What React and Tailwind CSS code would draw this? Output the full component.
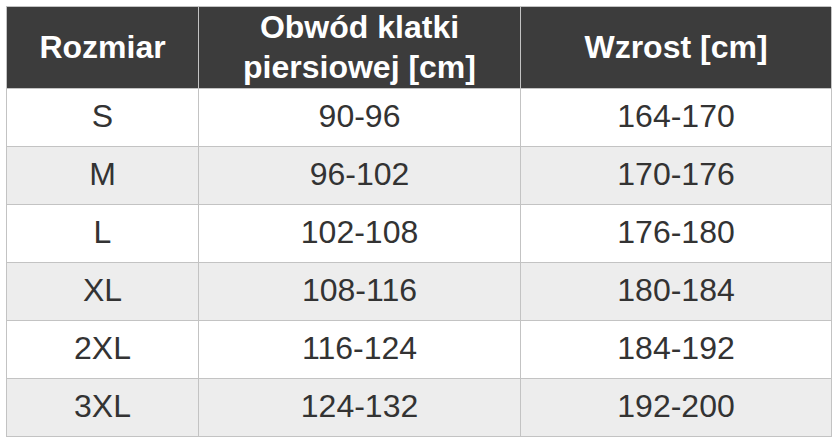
const rows = [
  ['S', '90-96', '164-170'],
  ['M', '96-102', '170-176'],
  ['L', '102-108', '176-180'],
  ['XL', '108-116', '180-184'],
  ['2XL', '116-124', '184-192'],
  ['3XL', '124-132', '192-200'],
]

export default function App() {
  return (
    <div className="h-[445px] w-[838px] bg-white pl-[6px] pt-[6px]" style={{ fontFamily: '"Liberation Sans", Arial, sans-serif' }}>
      <div className="grid w-[825px] grid-cols-[192px_322px_311px] border-l border-t border-[#c3c3c3]">
        {['Rozmiar', 'Obwód klatki\npiersiowej [cm]', 'Wzrost [cm]'].map((h) => (
          <div
            key={h}
            className="flex h-[82px] items-center justify-center whitespace-pre-line border-b border-r border-[#c3c3c3] bg-[#3c3c3c] pb-[2px] text-center text-[32px] font-bold leading-[40px] text-white"
          >
            {h}
          </div>
        ))}
        {rows.map((row, i) =>
          row.map((cell, j) => (
            <div
              key={`${i}-${j}`}
              className={`flex h-[58px] items-center justify-center border-b border-r border-[#c3c3c3] pb-[3px] text-[32px] text-[#333333] ${
                i % 2 === 1 ? 'bg-[#ededed]' : 'bg-white'
              }`}
            >
              {cell}
            </div>
          ))
        )}
      </div>
    </div>
  )
}
